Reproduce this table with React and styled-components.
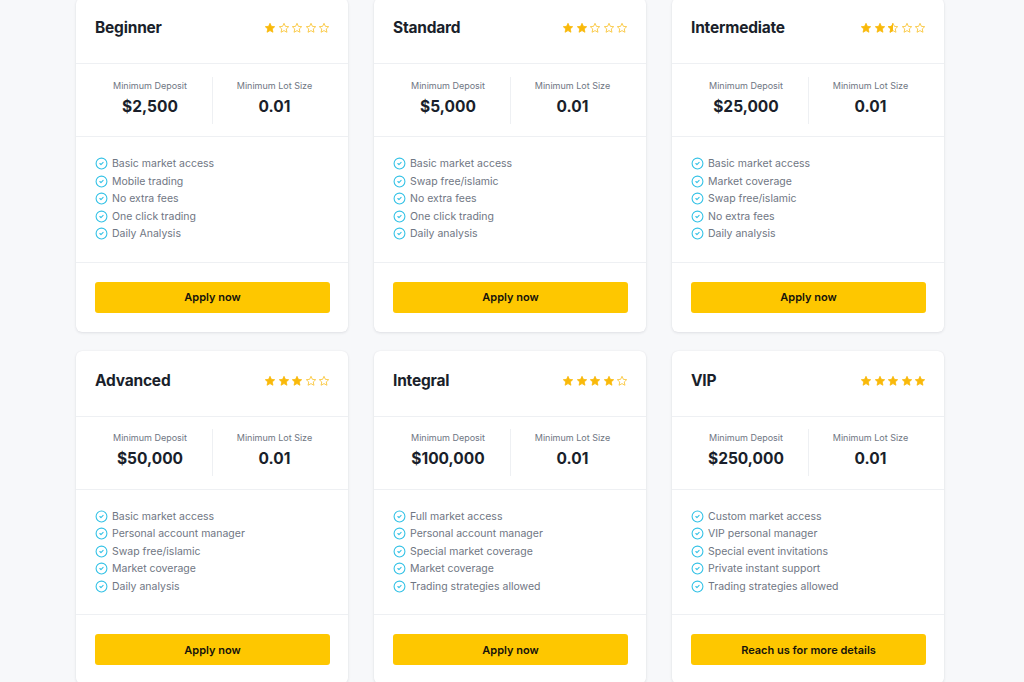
import React from 'react'
import styled, { createGlobalStyle } from 'styled-components'
import { CircleCheck } from 'lucide-react'

const plans = [
  { name: 'Beginner', rating: 1, deposit: '$2,500', lot: '0.01', cta: 'Apply now',
    features: ['Basic market access', 'Mobile trading', 'No extra fees', 'One click trading', 'Daily Analysis'] },
  { name: 'Standard', rating: 2, deposit: '$5,000', lot: '0.01', cta: 'Apply now',
    features: ['Basic market access', 'Swap free/islamic', 'No extra fees', 'One click trading', 'Daily analysis'] },
  { name: 'Intermediate', rating: 2.5, deposit: '$25,000', lot: '0.01', cta: 'Apply now',
    features: ['Basic market access', 'Market coverage', 'Swap free/islamic', 'No extra fees', 'Daily analysis'] },
  { name: 'Advanced', rating: 3, deposit: '$50,000', lot: '0.01', cta: 'Apply now',
    features: ['Basic market access', 'Personal account manager', 'Swap free/islamic', 'Market coverage', 'Daily analysis'] },
  { name: 'Integral', rating: 4, deposit: '$100,000', lot: '0.01', cta: 'Apply now',
    features: ['Full market access', 'Personal account manager', 'Special market coverage', 'Market coverage', 'Trading strategies allowed'] },
  { name: 'VIP', rating: 5, deposit: '$250,000', lot: '0.01', cta: 'Reach us for more details',
    features: ['Custom market access', 'VIP personal manager', 'Special event invitations', 'Private instant support', 'Trading strategies allowed'] },
]

const GlobalStyle = createGlobalStyle`
  body {
    margin: 0;
    background: #f7f8fa;
    font-family: Inter, "Liberation Sans", sans-serif;
  }
`

const Page = styled.div`
  display: grid;
  grid-template-columns: repeat(3, 272px);
  column-gap: 26px;
  row-gap: 19px;
  padding: 0 0 0 76px;
  margin-top: -2px;
`

const Card = styled.div`
  background: #fff;
  border-radius: 6px;
  box-shadow: 0 1px 3px rgba(20, 30, 50, 0.1), 0 0 1px rgba(20, 30, 50, 0.08);
  display: flex;
  flex-direction: column;
`

const Header = styled.div`
  height: 66px;
  box-sizing: border-box;
  padding: 0 18px 6px 19px;
  display: flex;
  align-items: center;
  justify-content: space-between;
  border-bottom: 1px solid #eef0f3;
`

const Title = styled.h3`
  margin: 0;
  font-size: 15.5px;
  font-weight: 700;
  color: #1a1f2b;
  letter-spacing: -0.2px;
`

const Stars = styled.div`
  display: flex;
  gap: 1.5px;
  margin-top: 1px;
`

const Stats = styled.div`
  height: 73px;
  box-sizing: border-box;
  padding: 0 12px;
  display: grid;
  grid-template-columns: 1fr 1fr;
  align-items: center;
  border-bottom: 1px solid #eef0f3;
`

const Stat = styled.div`
  display: flex;
  flex-direction: column;
  align-items: center;
  justify-content: center;
  height: 47px;
  padding-bottom: 4px;
  box-sizing: border-box;
  border-left: ${p => (p.$divided ? '1px solid #eef0f3' : 'none')};
`

const StatLabel = styled.span`
  font-size: 9px;
  color: #6f7683;
  line-height: 12px;
`

const StatValue = styled.span`
  font-size: 15.5px;
  font-weight: 700;
  color: #1a1f2b;
  margin-top: 5px;
  line-height: 20px;
`

const Features = styled.ul`
  list-style: none;
  margin: 0;
  padding: 18px 19px 19px;
  display: flex;
  flex-direction: column;
  border-bottom: 1px solid #eef0f3;
`

const Feature = styled.li`
  display: flex;
  align-items: center;
  gap: 4px;
  height: 17.5px;
  font-size: 10.5px;
  color: #6f7683;
  svg {
    color: #34c2e6;
    flex-shrink: 0;
  }
`

const Footer = styled.div`
  padding: 19px 18px 19px 19px;
`

const Button = styled.button`
  width: 100%;
  height: 31px;
  border: none;
  border-radius: 3px;
  background: #fec700;
  color: #15130c;
  font-family: Inter, "Liberation Sans", sans-serif;
  font-size: 11px;
  font-weight: 600;
  cursor: pointer;
`

const STAR = 'M12 2.6l2.8 6.1 6.6.7-4.9 4.5 1.4 6.6L12 17.2l-5.9 3.3 1.4-6.6-4.9-4.5 6.6-.7z'

const Star = ({ fill, id }) => (
  <svg width="12" height="12" viewBox="0 0 24 24">
    <defs>
      <clipPath id={id}>
        <rect x="0" y="0" width="12" height="24" />
      </clipPath>
    </defs>
    {fill === 1 && <path d={STAR} fill="#f9b90a" stroke="#f9b90a" strokeWidth="1.6" strokeLinejoin="round" />}
    {fill < 1 && <path d={STAR} fill="none" stroke="#f9c330" strokeWidth="1.7" strokeLinejoin="round" />}
    {fill === 0.5 && <path d={STAR} fill="#f9b90a" stroke="#f9b90a" strokeWidth="1.6" strokeLinejoin="round" clipPath={`url(#${id})`} />}
  </svg>
)

const Rating = ({ value, name }) => (
  <Stars>
    {[0, 1, 2, 3, 4].map(i => {
      const f = value >= i + 1 ? 1 : value > i ? 0.5 : 0
      return <Star key={i} fill={f} id={`half-${name}-${i}`} />
    })}
  </Stars>
)

const PlanCard = ({ plan }) => (
  <Card>
    <Header>
      <Title>{plan.name}</Title>
      <Rating value={plan.rating} name={plan.name} />
    </Header>
    <Stats>
      <Stat>
        <StatLabel>Minimum Deposit</StatLabel>
        <StatValue>{plan.deposit}</StatValue>
      </Stat>
      <Stat $divided>
        <StatLabel>Minimum Lot Size</StatLabel>
        <StatValue>{plan.lot}</StatValue>
      </Stat>
    </Stats>
    <Features>
      {plan.features.map(f => (
        <Feature key={f}>
          <CircleCheck size={13} strokeWidth={2} />
          {f}
        </Feature>
      ))}
    </Features>
    <Footer>
      <Button>{plan.cta}</Button>
    </Footer>
  </Card>
)

const App = () => (
  <>
    <GlobalStyle />
    <Page>
      {plans.map(p => <PlanCard key={p.name} plan={p} />)}
    </Page>
  </>
)

export default App
